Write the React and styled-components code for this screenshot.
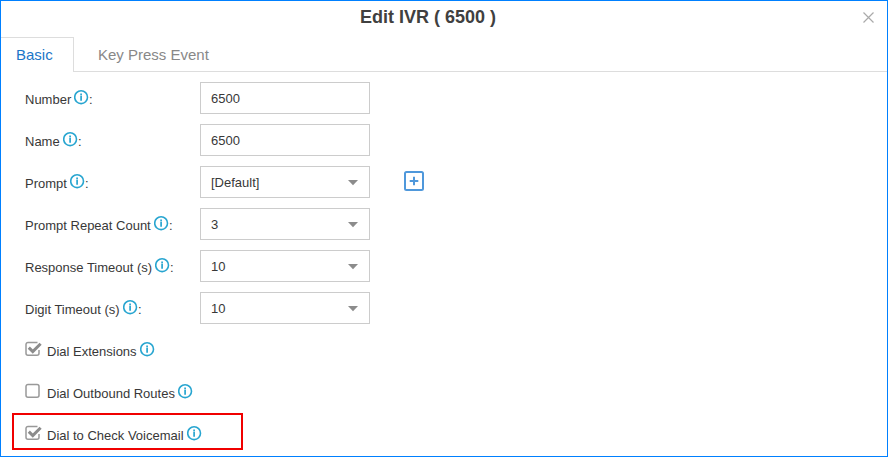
import React from "react";
import styled, { createGlobalStyle } from "styled-components";

const GlobalStyle = createGlobalStyle`
  *, *::before, *::after { box-sizing: border-box; }
  body { margin: 0; background: #fff; font-family: "Liberation Sans", Arial, sans-serif; }
`;

const Dialog = styled.main`
  display: flex;
  flex-direction: column;
  width: 888px;
  height: 457px;
  overflow: hidden;
  border: 1px solid #0080ff;
  background: #fff;
  color: #383838;
  font-size: 13px;
`;

const Header = styled.header`
  display: flex;
  justify-content: space-between;
  flex: none;
  height: 36px;
  padding: 0 12px 0 359px;
`;

const Title = styled.h1`
  margin: 0;
  color: #404040;
  font-size: 18px;
  line-height: 33px;
  white-space: nowrap;
`;

const CloseButton = styled.button`
  display: flex;
  align-self: start;
  margin-top: 10px;
  padding: 0;
  border: 0;
  background: none;
`;

const Tabs = styled.nav`
  display: flex;
  flex: none;
  height: 35px;
`;

const Tab = styled.button`
  width: ${(p) => p.$width}px;
  padding: ${(p) => (p.$active ? "0 0 1px 15px" : "1px 0 1px 24px")};
  border: 0 solid #ddd;
  border-width: ${(p) => (p.$active ? "1px 1px 0 0" : "0 0 1px")};
  background: #fff;
  color: ${(p) => (p.$active ? "#1b76c8" : "#888")};
  font: 15px/34px "Liberation Sans", Arial, sans-serif;
  text-align: left;
`;

const TabFill = styled.div`
  flex: 1;
  border-bottom: 1px solid #ddd;
`;

const Form = styled.form`
  display: grid;
  grid-auto-rows: 42px;
  padding: 5px 0 0 24px;
`;

const Row = styled.div`
  position: relative;
  display: flex;
  align-items: center;
`;

const Label = styled.label`
  display: flex;
  width: 175px;
  height: 16px;
  line-height: 16px;
  white-space: nowrap;
`;

const LabelText = styled.span`
  width: ${(p) => p.$width}px;
  padding-top: 2px;
`;

const InfoSvg = styled.svg`
  display: block;
  flex: none;
  width: 15px;
  height: 15px;
`;

const Colon = styled.span`
  padding-top: 2px;
`;

const Field = styled.div`
  display: flex;
  align-items: center;
  justify-content: space-between;
  width: 170px;
  height: 32px;
  padding: 1px 11px 0 10px;
  border: 1px solid #ccc;
  line-height: 30px;
`;

const Value = styled.span`
  height: 29px;
`;

const AddButton = styled.button`
  display: flex;
  margin: -2px 0 0 34px;
  padding: 0;
  border: 0;
  background: none;
`;

const CheckMark = styled.span`
  display: flex;
  width: 22px;
  padding-bottom: 2px;
`;

const Highlight = styled.div`
  position: absolute;
  left: -13px;
  top: 0;
  width: 231px;
  height: 37px;
  border: 2px solid #f00000;
  pointer-events: none;
`;

function InfoIcon() {
  return (
    <InfoSvg viewBox="0 0 15 15" fill="none">
      <circle cx="7.1" cy="7.2" r="6.4" stroke="#27a5d0" strokeWidth="1.6" />
      <path d="M7.1 3.5v1.5M7.1 5.5v5.2" stroke="#27a5d0" strokeWidth="1.7" />
    </InfoSvg>
  );
}

function CheckIcon({ checked }) {
  return (
    <svg width="18" height="16" viewBox="0 0 18 16" fill="none">
      <path
        d={
          checked
            ? "M14 9v3.2a2 2 0 0 1-2 2H3a2 2 0 0 1-2-2V3.5a2 2 0 0 1 2-2h9.5"
            : "M3 1.5h9a2 2 0 0 1 2 2v8.7a2 2 0 0 1-2 2H3a2 2 0 0 1-2-2V3.5a2 2 0 0 1 2-2z"
        }
        stroke="#999"
        strokeWidth="1.5"
      />
      {checked && <path d="M3.8 6.6l4 4 7.8-7.8" stroke="#8c8c8c" strokeWidth="3" />}
    </svg>
  );
}

const FIELDS = [
  { label: "Number", width: 49, value: "6500" },
  { label: "Name", width: 38, value: "6500" },
  { label: "Prompt", width: 45, value: "[Default]", select: true, add: true },
  { label: "Prompt Repeat Count", width: 129, value: "3", select: true },
  { label: "Response Timeout (s)", width: 130, value: "10", select: true },
  { label: "Digit Timeout (s)", width: 98, value: "10", select: true },
];

const OPTIONS = [
  { label: "Dial Extensions", width: 93, checked: true },
  { label: "Dial Outbound Routes", width: 131, checked: false },
  { label: "Dial to Check Voicemail", width: 140, checked: true, highlight: true },
];

export default function App() {
  return (
    <Dialog>
      <GlobalStyle />
      <Header>
        <Title>Edit IVR ( 6500 )</Title>
        <CloseButton type="button" aria-label="Close">
          <svg width="13" height="13" viewBox="0 0 13 13">
            <path d="M1.5 1.5l10 10M11.5 1.5l-10 10" stroke="#aaa" strokeWidth="1.2" />
          </svg>
        </CloseButton>
      </Header>
      <Tabs>
        <Tab type="button" $active $width={73}>Basic</Tab>
        <Tab type="button" $width={160}>Key Press Event</Tab>
        <TabFill />
      </Tabs>
      <Form>
        {FIELDS.map((f) => (
          <Row key={f.label}>
            <Label>
              <LabelText $width={f.width}>{f.label}</LabelText>
              <InfoIcon />
              <Colon>:</Colon>
            </Label>
            <Field>
              <Value>{f.value}</Value>
              {f.select && (
                <svg width="10" height="6" viewBox="0 0 10 6">
                  <path d="M0 0h10L5 5.2z" fill="#8c8c8c" />
                </svg>
              )}
            </Field>
            {f.add && (
              <AddButton type="button" aria-label="Add prompt">
                <svg width="20" height="20" viewBox="0 0 20 20" fill="none" stroke="#4f98db">
                  <rect x="1" y="1" width="18" height="18" rx="1.5" strokeWidth="2" />
                  <path d="M10 5.7v8.6M5.7 10h8.6" strokeWidth="2" />
                </svg>
              </AddButton>
            )}
          </Row>
        ))}
        {OPTIONS.map((o) => (
          <Row key={o.label}>
            <CheckMark>
              <CheckIcon checked={o.checked} />
            </CheckMark>
            <Label>
              <LabelText $width={o.width}>{o.label}</LabelText>
              <InfoIcon />
            </Label>
            {o.highlight && <Highlight />}
          </Row>
        ))}
      </Form>
    </Dialog>
  );
}
